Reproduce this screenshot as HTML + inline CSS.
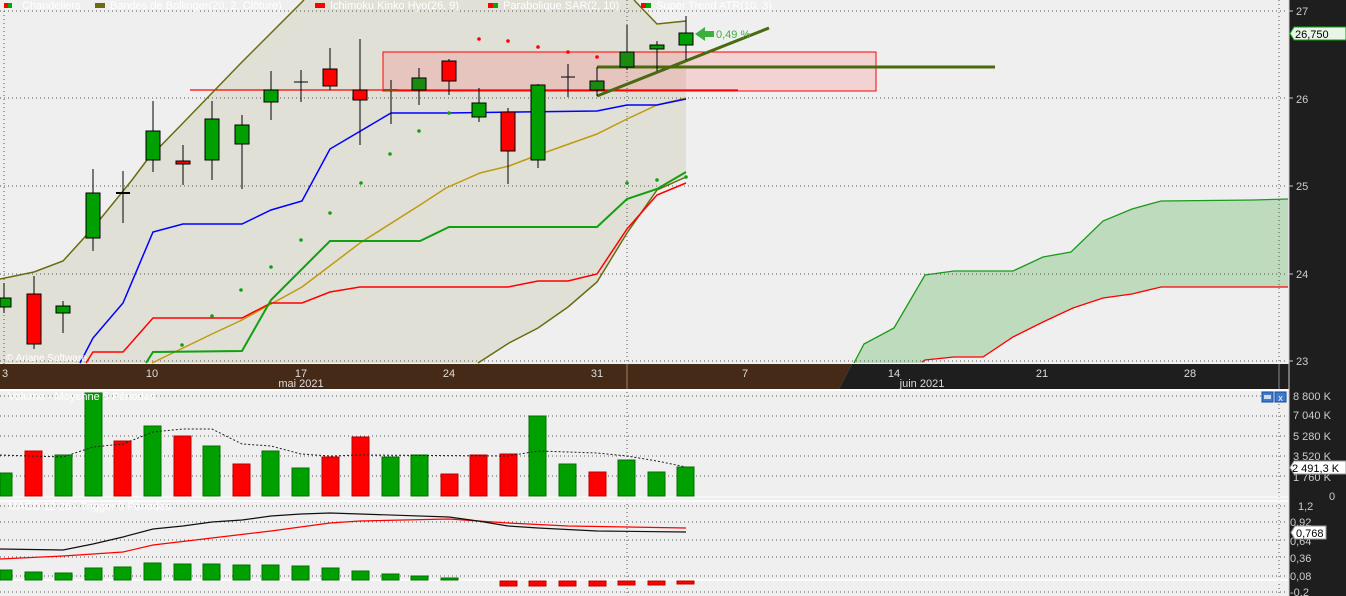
<!DOCTYPE html>
<html><head><meta charset="utf-8"><style>
html,body{margin:0;padding:0;background:#efefef;}
svg{display:block;font-family:"Liberation Sans",sans-serif;}
</style></head><body>
<svg width="1346" height="596" viewBox="0 0 1346 596" xmlns="http://www.w3.org/2000/svg">
<rect x="0" y="0" width="1346" height="596" fill="#efefef"/>
<!-- bollinger shaded area -->
<polygon points="0,279 34,272 63,261 93,228 132,180 147,160 183,123 212,93 241,63 272,32 304,0 634,0 657,24 686,21 686,177 657,190 627,233 597,282 568,307 538,328 509,343 478,363 0,363" fill="#e0e0d7"/>
<!-- cloud -->
<polygon points="854,363 864,344 894,328 925,275 954,271 1013,271 1043,257 1071,252 1103,221 1132,209 1161,201 1254,200 1288,199 1288,287 1161,287 1132,294 1103,298 1073,308 1043,322 1013,337 983,357 954,357 925,360 925,363" fill="#bedbbe"/>
<polyline points="854,363 864,344 894,328 925,275 954,271 1013,271 1043,257 1071,252 1103,221 1132,209 1161,201 1254,200 1288,199" fill="none" stroke="#1a9a1a" stroke-width="1.3"/>
<polyline points="922,362 925,360 954,357 983,357 1013,337 1043,322 1073,308 1103,298 1132,294 1161,287 1288,287" fill="none" stroke="#f00" stroke-width="1.3"/>
<!-- grid -->
<g stroke="#555" stroke-width="1" stroke-dasharray="1,3">
<line x1="0" y1="11" x2="1288" y2="11"/><line x1="0" y1="98" x2="1288" y2="98"/><line x1="0" y1="186" x2="1288" y2="186"/><line x1="0" y1="274" x2="1288" y2="274"/><line x1="0" y1="361" x2="1288" y2="361"/>
<line x1="4" y1="11" x2="4" y2="364"/><line x1="627" y1="0" x2="627" y2="596"/><line x1="1279" y1="0" x2="1279" y2="596"/>
<line x1="0" y1="396" x2="1288" y2="396"/><line x1="0" y1="416" x2="1288" y2="416"/><line x1="0" y1="436" x2="1288" y2="436"/><line x1="0" y1="456" x2="1288" y2="456"/><line x1="0" y1="476" x2="1288" y2="476"/>
<line x1="0" y1="506" x2="1288" y2="506"/><line x1="0" y1="522" x2="1288" y2="522"/><line x1="0" y1="540" x2="1288" y2="540"/><line x1="0" y1="557" x2="1288" y2="557"/><line x1="0" y1="576" x2="1288" y2="576"/><line x1="0" y1="592" x2="1288" y2="592"/>
</g>
<!-- zone -->
<rect x="383" y="52" width="493" height="39" fill="rgba(255,80,80,0.18)" stroke="#f00" stroke-width="1"/>
<line x1="190" y1="90" x2="738" y2="90" stroke="#f00" stroke-width="1.3"/>
<!-- indicator lines -->
<polyline points="0,279 34,272 63,261 93,228 132,180 147,160 183,123 212,93 241,63 272,32 304,0" fill="none" stroke="#6b6b10" stroke-width="1.5"/>
<polyline points="634,0 657,24 686,21" fill="none" stroke="#6b6b10" stroke-width="1.5"/>
<polyline points="478,363 509,343 538,328 568,307 597,282 627,233 657,190 686,177" fill="none" stroke="#6b6b10" stroke-width="1.5"/>
<polyline points="152,363 212,334 242,320 302,287 360,243 420,205 446,188 480,173 509,166 538,155 597,134 627,119 657,105 686,98" fill="none" stroke="#c09a10" stroke-width="1.5"/>
<polyline points="80,363 93,338 123,303 153,232 183,224 242,224 271,210 302,201 330,149 391,113 447,113 597,111 627,105 657,105 686,99" fill="none" stroke="#0000ff" stroke-width="1.5"/>
<polyline points="86,363 93,352 123,352 153,318 242,318 271,303 302,303 330,292 360,287 508,287 538,281 568,281 597,274 627,229 657,195 686,183" fill="none" stroke="#f00" stroke-width="1.5"/>
<polyline points="146,363 153,352 242,351 271,300 330,241 420,241 449,227 597,227 627,199 657,189 686,172" fill="none" stroke="#10a010" stroke-width="2"/>
<!-- SAR dots -->
<g fill="#f00"><circle cx="479" cy="39" r="1.8"/><circle cx="508" cy="41" r="1.8"/><circle cx="538" cy="47" r="1.8"/><circle cx="568" cy="52" r="1.8"/><circle cx="597" cy="57" r="1.8"/></g>
<g fill="#10a010"><circle cx="182" cy="345" r="1.8"/><circle cx="212" cy="316" r="1.8"/><circle cx="241" cy="290" r="1.8"/><circle cx="271" cy="267" r="1.8"/><circle cx="301" cy="240" r="1.8"/><circle cx="330" cy="213" r="1.8"/><circle cx="361" cy="183" r="1.8"/><circle cx="390" cy="154" r="1.8"/><circle cx="419" cy="131" r="1.8"/><circle cx="449" cy="113" r="1.8"/><circle cx="627" cy="183" r="1.8"/><circle cx="657" cy="180" r="1.8"/><circle cx="686" cy="177" r="1.8"/></g>
<!-- trend lines -->
<line x1="597" y1="67" x2="995" y2="67" stroke="#4a6a10" stroke-width="3"/>
<line x1="597" y1="96" x2="769" y2="28" stroke="#4a6a10" stroke-width="3"/>
<!-- candles -->
<g stroke="#000" stroke-width="1">
<line x1="4" y1="283" x2="4" y2="313"/><rect x="0" y="298" width="11" height="9" fill="#00a000"/>
<line x1="34" y1="276" x2="34" y2="349"/><rect x="27" y="294" width="14" height="50" fill="#f00"/>
<line x1="63" y1="301" x2="63" y2="333"/><rect x="56" y="306" width="14" height="7" fill="#00a000"/>
<line x1="93" y1="169" x2="93" y2="251"/><rect x="86" y="193" width="14" height="45" fill="#00a000"/>
<line x1="123" y1="171" x2="123" y2="223"/><line x1="116" y1="193" x2="130" y2="193" stroke-width="2"/>
<line x1="153" y1="101" x2="153" y2="172"/><rect x="146" y="131" width="14" height="29" fill="#00a000"/>
<line x1="183" y1="145" x2="183" y2="185"/><rect x="176" y="161" width="14" height="3" fill="#f00"/>
<line x1="212" y1="101" x2="212" y2="180"/><rect x="205" y="119" width="14" height="41" fill="#00a000"/>
<line x1="242" y1="115" x2="242" y2="189"/><rect x="235" y="125" width="14" height="19" fill="#00a000"/>
<line x1="271" y1="71" x2="271" y2="120"/><rect x="264" y="90" width="14" height="12" fill="#00a000"/>
<line x1="301" y1="70" x2="301" y2="102"/><line x1="294" y1="82" x2="308" y2="82"/>
<line x1="330" y1="48" x2="330" y2="90"/><rect x="323" y="69" width="14" height="17" fill="#f00"/>
<line x1="360" y1="39" x2="360" y2="145"/><rect x="353" y="90" width="14" height="10" fill="#f00"/>
<line x1="391" y1="80" x2="391" y2="124"/><line x1="384" y1="90" x2="398" y2="90" stroke="#a04010" stroke-width="2"/>
<line x1="419" y1="68" x2="419" y2="105"/><rect x="412" y="78" width="14" height="12" fill="#1a8a10"/>
<line x1="449" y1="59" x2="449" y2="95"/><rect x="442" y="61" width="14" height="20" fill="#f00"/>
<line x1="479" y1="88" x2="479" y2="122"/><rect x="472" y="103" width="14" height="14" fill="#00a000"/>
<line x1="508" y1="108" x2="508" y2="184"/><rect x="501" y="112" width="14" height="39" fill="#f00"/>
<line x1="538" y1="84" x2="538" y2="168"/><rect x="531" y="85" width="14" height="75" fill="#00a000"/>
<line x1="568" y1="64" x2="568" y2="97"/><line x1="561" y1="77" x2="575" y2="77"/>
<line x1="597" y1="67" x2="597" y2="96"/><rect x="590" y="81" width="14" height="9" fill="#1a8a10"/>
<line x1="627" y1="25" x2="627" y2="70"/><rect x="620" y="52" width="14" height="15" fill="#1a8a10"/>
<line x1="657" y1="41" x2="657" y2="71"/><rect x="650" y="45" width="14" height="4" fill="#00a000"/>
<line x1="686" y1="16" x2="686" y2="60"/><rect x="679" y="33" width="14" height="12" fill="#00a000"/>
</g>
<!-- price arrow -->
<polygon points="695,34 705,27 705,31 714,31 714,37 705,37 705,41" fill="#3cb03c"/>
<text x="716" y="38" font-size="11" fill="#3cb03c">0,49 %</text>
<!-- legend -->
<g font-size="11" fill="#fff">
<rect x="4" y="3" width="4" height="5" fill="#f00"/><rect x="8" y="3" width="4" height="5" fill="#0a0"/>
<text x="22" y="9">Chandeliers</text>
<rect x="95" y="3" width="10" height="5" fill="#6b6b10"/><text x="110" y="9">Bandes de Bollinger(20, 2, Clôture)</text>
<rect x="315" y="3" width="10" height="5" fill="#f00"/><text x="330" y="9">Ichimoku Kinko Hyo(26, 9)</text>
<rect x="488" y="3" width="5" height="5" fill="#f00"/><rect x="493" y="3" width="5" height="5" fill="#0a0"/><text x="503" y="9">Parabolique SAR(2, 10)</text>
<rect x="641" y="3" width="5" height="5" fill="#f00"/><rect x="646" y="3" width="5" height="5" fill="#0a0"/><text x="656" y="9">Super Trend ATR(10, 3)</text>
<text x="6" y="361" font-size="10">© Ariane Software</text>
</g>
<!-- time axis -->
<polygon points="0,364 852,364 839,389 0,389" fill="#452a17"/>
<polygon points="852,364 1290,364 1290,389 839,389" fill="#1e1e1e"/>
<line x1="627" y1="364" x2="627" y2="389" stroke="#a08060"/>
<line x1="1279" y1="364" x2="1279" y2="389" stroke="#888"/>
<g font-size="11" fill="#ddd" text-anchor="middle">
<text x="5" y="377">3</text><text x="152" y="377">10</text><text x="301" y="377">17</text><text x="449" y="377">24</text><text x="597" y="377">31</text><text x="745" y="377">7</text><text x="894" y="377">14</text><text x="1042" y="377">21</text><text x="1190" y="377">28</text>
<text x="301" y="387">mai 2021</text><text x="922" y="387">juin 2021</text>
</g>
<line x1="0" y1="390" x2="1290" y2="390" stroke="#fff" stroke-width="2"/>
<!-- volume -->
<g stroke="#007000" stroke-width="1" fill="#00a000">
<rect x="0" y="473" width="12" height="23"/><rect x="55" y="455" width="17" height="41"/><rect x="85" y="393" width="17" height="103"/><rect x="144" y="426" width="17" height="70"/><rect x="203" y="446" width="17" height="50"/><rect x="262" y="451" width="17" height="45"/><rect x="292" y="468" width="17" height="28"/><rect x="382" y="457" width="17" height="39"/><rect x="411" y="455" width="17" height="41"/><rect x="529" y="416" width="17" height="80"/><rect x="559" y="464" width="17" height="32"/><rect x="618" y="460" width="17" height="36"/><rect x="648" y="472" width="17" height="24"/><rect x="677" y="467" width="17" height="29"/>
</g>
<g stroke="#b00" stroke-width="1" fill="#f00">
<rect x="25" y="451" width="17" height="45"/><rect x="114" y="441" width="17" height="55"/><rect x="174" y="436" width="17" height="60"/><rect x="233" y="464" width="17" height="32"/><rect x="322" y="457" width="17" height="39"/><rect x="352" y="437" width="17" height="59"/><rect x="441" y="474" width="17" height="22"/><rect x="470" y="455" width="17" height="41"/><rect x="500" y="454" width="17" height="42"/><rect x="589" y="472" width="17" height="24"/>
</g>
<polyline points="0,455 63,457 93,447 123,444 153,432 183,429 212,429 242,444 271,446 301,454 330,456 360,455 508,456 538,451 568,452 597,453 627,456 657,461 686,467" fill="none" stroke="#222" stroke-width="1" stroke-dasharray="2,2"/>
<text x="8" y="400" font-size="11" fill="#fff">Volume - Moyenne 5 Périodes</text>
<rect x="1262" y="392" width="11" height="10" fill="#3a7ad0" stroke="#1a4a9a"/><rect x="1264" y="395" width="7" height="4" fill="#cde"/>
<rect x="1275" y="392" width="11" height="10" fill="#3a7ad0" stroke="#1a4a9a"/><text x="1280.5" y="401" font-size="9" fill="#fff" text-anchor="middle">x</text>
<line x1="0" y1="497" x2="1290" y2="497" stroke="#fff"/>
<line x1="0" y1="501" x2="1290" y2="501" stroke="#fff" stroke-width="1.5"/>
<!-- MACD -->
<text x="8" y="510" font-size="11" fill="#fff">MACD 12 26 - Trigger 9 Périodes</text>
<line x1="0" y1="580" x2="1288" y2="580" stroke="#fff" stroke-width="1.5"/>
<polyline points="0,559 63,556 123,552 153,545 212,538 271,531 330,523 360,521 449,519 508,523 568,526 686,528" fill="none" stroke="#f00" stroke-width="1.2"/>
<polyline points="0,549 63,550 93,544 123,537 153,529 183,526 212,522 242,520 271,516 301,514 330,513 360,514 449,517 478,521 508,526 538,528 597,531 686,532" fill="none" stroke="#111" stroke-width="1.2"/>
<g stroke="#007000" fill="#00a000">
<rect x="0" y="570" width="12" height="10"/><rect x="25" y="572" width="17" height="8"/><rect x="55" y="573" width="17" height="7"/><rect x="85" y="568" width="17" height="12"/><rect x="114" y="567" width="17" height="13"/><rect x="144" y="563" width="17" height="17"/><rect x="174" y="564" width="17" height="16"/><rect x="203" y="564" width="17" height="16"/><rect x="233" y="565" width="17" height="15"/><rect x="262" y="565" width="17" height="15"/><rect x="292" y="566" width="17" height="14"/><rect x="322" y="568" width="17" height="12"/><rect x="352" y="571" width="17" height="9"/><rect x="382" y="574" width="17" height="6"/><rect x="411" y="576" width="17" height="4"/><rect x="441" y="578" width="17" height="2"/>
</g>
<g stroke="#b00" fill="#f00">
<rect x="500" y="581" width="17" height="5"/><rect x="529" y="581" width="17" height="5"/><rect x="559" y="581" width="17" height="5"/><rect x="589" y="581" width="17" height="5"/><rect x="618" y="581" width="17" height="4"/><rect x="648" y="581" width="17" height="4"/><rect x="677" y="581" width="17" height="3"/>
</g>
<!-- right axis -->
<rect x="1289" y="0" width="57" height="596" fill="#1e1e1e"/>
<line x1="1289" y1="0" x2="1289" y2="596" stroke="#ccc"/>
<g font-size="11" fill="#ccc">
<text x="1296" y="15">27</text><text x="1296" y="103">26</text><text x="1296" y="190">25</text><text x="1296" y="278">24</text><text x="1296" y="365">23</text>
<text x="1293" y="400">8 800 K</text><text x="1293" y="419">7 040 K</text><text x="1293" y="440">5 280 K</text><text x="1293" y="460">3 520 K</text><text x="1293" y="481">1 760 K</text><text x="1329" y="500">0</text>
<text x="1298" y="510">1,2</text><text x="1290" y="526">0,92</text><text x="1290" y="545">0,64</text><text x="1290" y="562">0,36</text><text x="1290" y="580">0,08</text><text x="1290" y="596">-0,2</text>
</g>
<g stroke="#ccc"><line x1="1289" y1="11" x2="1293" y2="11"/><line x1="1289" y1="98" x2="1293" y2="98"/><line x1="1289" y1="186" x2="1293" y2="186"/><line x1="1289" y1="274" x2="1293" y2="274"/><line x1="1289" y1="361" x2="1293" y2="361"/></g>
<polygon points="1294,27 1346,27 1346,40 1294,40 1290,33.5" fill="#e8f6e8" stroke="#10a010"/>
<text x="1295" y="38" font-size="11" fill="#000">26,750</text>
<polygon points="1294,461 1346,461 1346,474 1294,474 1290,467.5" fill="#fff" stroke="#999"/>
<text x="1292" y="472" font-size="11" fill="#000">2 491,3 K</text>
<polygon points="1295,526 1326,526 1326,539 1295,539 1291,532.5" fill="#fff" stroke="#999"/>
<text x="1296" y="537" font-size="11" fill="#000">0,768</text>
</svg>
</body></html>
